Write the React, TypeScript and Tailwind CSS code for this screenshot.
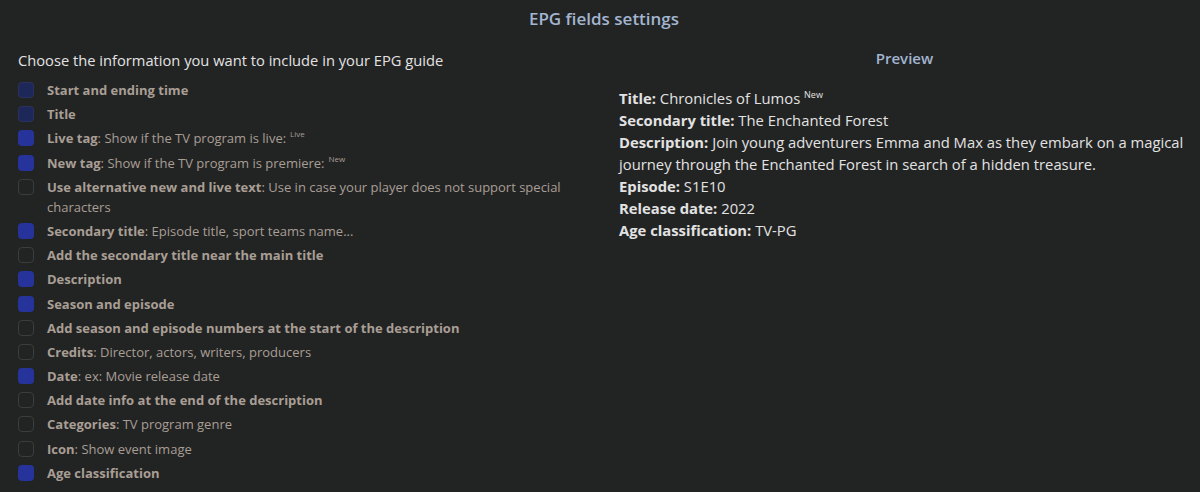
import React from 'react';

type Field = {
  label: string;
  hint?: string;
  checked: boolean;
  disabled?: boolean;
  tag?: string;
};

const fields: Field[] = [
  { label: 'Start and ending time', checked: true, disabled: true },
  { label: 'Title', checked: true, disabled: true },
  { label: 'Live tag', hint: 'Show if the TV program is live:', checked: true, tag: 'Live' },
  { label: 'New tag', hint: 'Show if the TV program is premiere:', checked: true, tag: 'New' },
  { label: 'Use alternative new and live text', hint: 'Use in case your player does not support special characters', checked: false },
  { label: 'Secondary title', hint: 'Episode title, sport teams name...', checked: true },
  { label: 'Add the secondary title near the main title', checked: false },
  { label: 'Description', checked: true },
  { label: 'Season and episode', checked: true },
  { label: 'Add season and episode numbers at the start of the description', checked: false },
  { label: 'Credits', hint: 'Director, actors, writers, producers', checked: false },
  { label: 'Date', hint: 'ex: Movie release date', checked: true },
  { label: 'Add date info at the end of the description', checked: false },
  { label: 'Categories', hint: 'TV program genre', checked: false },
  { label: 'Icon', hint: 'Show event image', checked: false },
  { label: 'Age classification', checked: true },
];

const preview: [string, React.ReactNode][] = [
  ['Title:', <>Chronicles of Lumos <span className="relative top-[2px] align-top text-[9px] leading-[12px]">New</span></>],
  ['Secondary title:', 'The Enchanted Forest'],
  ['Description:', 'Join young adventurers Emma and Max as they embark on a magical journey through the Enchanted Forest in search of a hidden treasure.'],
  ['Episode:', 'S1E10'],
  ['Release date:', '2022'],
  ['Age classification:', 'TV-PG'],
];

const Checkbox = ({ checked, disabled }: { checked: boolean; disabled?: boolean }) => {
  if (!checked) {
    return <span className="mt-[2px] w-4 h-4 shrink-0 rounded-[4px] border border-[#3a3d3d]" />;
  }
  return (
    <span
      className={
        disabled
          ? 'mt-[2px] w-4 h-4 shrink-0 rounded-[4px] bg-[#1e2759] border border-[#2b3260]'
          : 'mt-[2px] w-4 h-4 shrink-0 rounded-[4px] bg-[#25339a]'
      }
    />
  );
};

export default function App() {
  return (
    <div className="w-[1200px] h-[492px] bg-[#222424] overflow-hidden font-['Open_Sans',sans-serif]">
      <h1 className="pt-[6px] pl-2 text-center text-[17px] leading-[26px] font-semibold text-[#a3b5cf]">
        EPG fields settings
      </h1>
      <div className="flex mt-[18px]">
        <div className="w-[592px] pl-[18px]">
          <p className="text-[14.7px] leading-[20px] text-[#e2e2e2]">
            Choose the information you want to include in your EPG guide
          </p>
          <div className="mt-[10px] flex flex-col gap-[4.2px]">
            {fields.map((f, i) => (
              <div key={i} className="flex gap-[13px] pr-2">
                <Checkbox checked={f.checked} disabled={f.disabled} />
                <p className="text-[13px] leading-[20px] text-[#a99e94]">
                  <span className="font-bold">{f.label}</span>
                  {f.hint && (
                    <>
                      : {f.hint}
                      {f.tag && <span className="ml-1 align-top text-[8px] leading-[12px]">{f.tag}</span>}
                    </>
                  )}
                </p>
              </div>
            ))}
          </div>
        </div>
        <div className="flex-1 pl-[27px] pr-4 -mt-[2px]">
          <h2 className="pl-[6px] text-center text-[15px] leading-[20px] font-semibold text-[#a3b5cf]">Preview</h2>
          <div className="mt-[19px] text-[14.8px] leading-[22px] text-[#e2e2e2]">
            {preview.map(([k, v], i) => (
              <p key={i}>
                <span className="font-bold">{k}</span> {v}
              </p>
            ))}
          </div>
        </div>
      </div>
    </div>
  );
}
